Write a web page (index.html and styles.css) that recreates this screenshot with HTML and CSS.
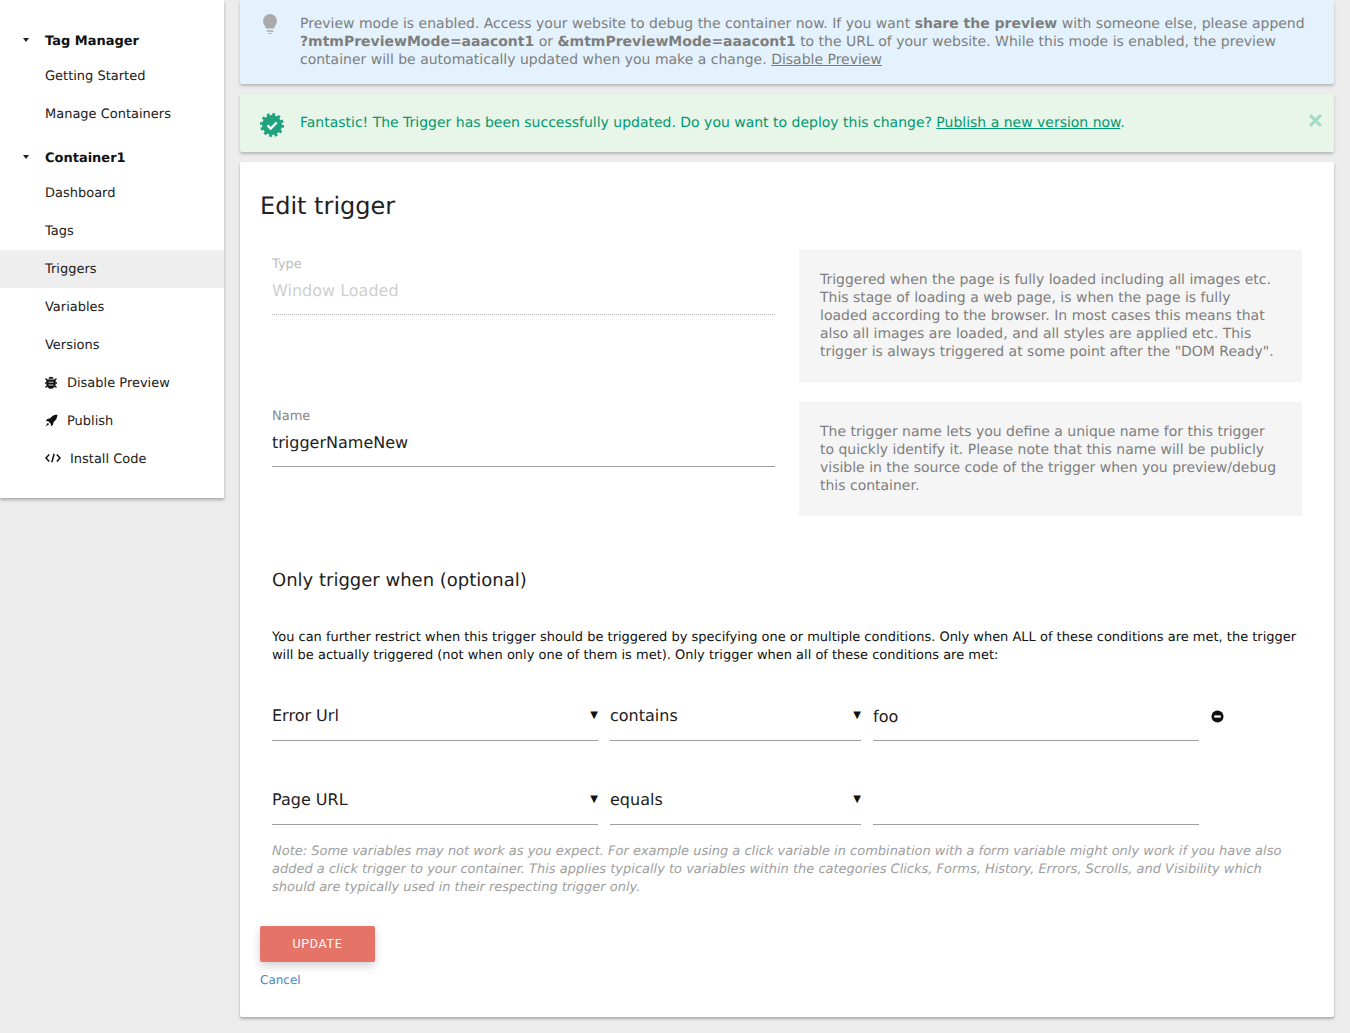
FILE: index.html
```html
<!DOCTYPE html>
<html lang="en">
<head>
<meta charset="utf-8">
<title>Edit trigger</title>
<link rel="stylesheet" href="styles.css">
</head>
<body>
<div class="layout">
  <nav class="sidebar">
    <div class="nav-head"><span class="caret"></span>Tag Manager</div>
    <a class="nav-item">Getting Started</a>
    <a class="nav-item">Manage Containers</a>
    <div class="nav-head second"><span class="caret"></span>Container1</div>
    <a class="nav-item">Dashboard</a>
    <a class="nav-item">Tags</a>
    <a class="nav-item active">Triggers</a>
    <a class="nav-item">Variables</a>
    <a class="nav-item">Versions</a>
    <a class="nav-item">
      <svg class="nav-icon bug" viewBox="0 0 12 13"><path d="M3.300 2.800a2.800 2.800 0 0 1 5.400 0z" fill="#111"/><path d="M1.800 3.400h8.400c.4.900.6 2 .6 3.300 0 3.600-1.900 6-4.800 6s-4.800-2.400-4.800-6c0-1.300.2-2.400.6-3.300z" fill="#111"/><path d="M.5 2.600l1.800 1.600M11.500 2.600L9.700 4.200M0 7h1.500M12 7h-1.500M.5 11.500l1.600-1.500M11.500 11.500L9.900 10" stroke="#111" stroke-width="1.300" fill="none"/><path d="M3.500 6.200h5M3.500 9h5" stroke="#fff" stroke-width=".8"/></svg>
      Disable Preview</a>
    <a class="nav-item">
      <svg class="nav-icon rocket" viewBox="0 0 14 14"><path d="M13.500.5c-3.500.2-6 1.500-8 4.200l-3 .6L.8 7.500l2.700.3 2.700 2.700.3 2.700 2.200-1.700.6-3c2.700-2 4-4.500 4.200-8.500z" fill="#111"/><path d="M3 9.500L.5 13.500l4-2.500z" fill="#111"/></svg>
      Publish</a>
    <a class="nav-item">
      <svg class="nav-icon code" viewBox="0 0 16 10"><path d="M4.200 1.500L1 5l3.200 3.500M11.800 1.500L15 5l-3.200 3.500M9.200.8L6.800 9.200" stroke="#111" stroke-width="1.500" fill="none"/></svg>
      Install Code</a>
  </nav>
  <main class="content">
    <section class="notice info">
      <svg class="notice-icon bulb" viewBox="0 0 16 22"><path d="M8 0a7.300 7.300 0 0 0-7.300 7.300c0 3.400 2.500 4.800 3 8h8.600c.5-3.200 3-4.600 3-8A7.300 7.300 0 0 0 8 0z" fill="#aaa"/><path d="M4.500 17h7v1.500h-7zM6 19.800h4l-1 1.200H7z" fill="#aaa"/></svg>
      <p class="notice-text">Preview mode is enabled. Access your website to debug the container now. If you want <b>share the preview</b> with someone else, please append <b>?mtmPreviewMode=aaacont1</b> or <b>&amp;mtmPreviewMode=aaacont1</b> to the URL of your website. While this mode is enabled, the preview container will be automatically updated when you make a change. <a class="underlined">Disable Preview</a></p>
    </section>
    <section class="notice success">
      <svg class="notice-icon badge" viewBox="0 0 24 24"><circle cx="12" cy="12" r="10" fill="#1fa27e"/><circle cx="12" cy="12" r="10.500" fill="none" stroke="#1fa27e" stroke-width="3" stroke-dasharray="2.749 2.749"/><path d="M7.500 12.300l3.200 3.200 6-6" stroke="#fff" stroke-width="2.400" fill="none"/></svg>
      <p class="notice-text">Fantastic! The Trigger has been successfully updated. Do you want to deploy this change? <a class="underlined">Publish a new version now</a>.</p>
      <svg class="close" viewBox="0 0 12 12"><path d="M1 1l10 10M11 1L1 11" stroke="#a3dcc6" stroke-width="2.800" fill="none"/></svg>
    </section>
    <section class="card">
      <h1 class="title">Edit trigger</h1>
      <div class="field-row first">
        <div class="field disabled">
          <label class="field-label">Type</label>
          <div class="field-value">Window Loaded</div>
        </div>
        <div class="help">Triggered when the page is fully loaded including all images etc. This stage of loading a web page, is when the page is fully loaded according to the browser. In most cases this means that also all images are loaded, and all styles are applied etc. This trigger is always triggered at some point after the "DOM Ready".</div>
      </div>
      <div class="field-row second">
        <div class="field">
          <label class="field-label">Name</label>
          <div class="field-value">triggerNameNew</div>
        </div>
        <div class="help">The trigger name lets you define a unique name for this trigger to quickly identify it. Please note that this name will be publicly visible in the source code of the trigger when you preview/debug this container.</div>
      </div>
      <h2 class="subtitle">Only trigger when (optional)</h2>
      <p class="desc">You can further restrict when this trigger should be triggered by specifying one or multiple conditions. Only when ALL of these conditions are met, the trigger will be actually triggered (not when only one of them is met). Only trigger when all of these conditions are met:</p>
      <div class="cond">
        <div class="select"><span>Error Url</span><i class="arrow">&#9660;</i></div>
        <div class="select"><span>contains</span><i class="arrow">&#9660;</i></div>
        <div class="select input">foo</div>
        <svg class="remove" viewBox="0 0 14 14"><circle cx="7" cy="7" r="6.500" fill="#111"/><rect x="3.500" y="5.800" width="7" height="2.400" fill="#fff"/></svg>
      </div>
      <div class="cond">
        <div class="select"><span>Page URL</span><i class="arrow">&#9660;</i></div>
        <div class="select"><span>equals</span><i class="arrow">&#9660;</i></div>
        <div class="select input"></div>
      </div>
      <p class="note">Note: Some variables may not work as you expect. For example using a click variable in combination with a form variable might only work if you have also added a click trigger to your container. This applies typically to variables within the categories Clicks, Forms, History, Errors, Scrolls, and Visibility which should are typically used in their respecting trigger only.</p>
      <button class="btn">UPDATE</button>
      <a class="cancel">Cancel</a>
    </section>
  </main>
</div>
</body>
</html>
```
FILE: styles.css
```css
* { box-sizing: border-box; }
html, body { margin: 0; padding: 0; }
body {
  background: #ececec;
  font-family: "DejaVu Sans", sans-serif;
  color: #212121;
  height: 1033px;
  overflow: hidden;
  text-rendering: geometricPrecision;
}
.layout { display: flex; align-items: flex-start; gap: 16px; }

.sidebar {
  width: 224px;
  height: 498px;
  flex: none;
  background: #fff;
  padding-top: 25px;
  box-shadow: 0 2px 3px rgba(0,0,0,.28);
  font-size: 12.993px;
}
.nav-head {
  height: 32px;
  display: flex;
  align-items: center;
  padding-left: 45px;
  font-weight: 700;
  color: #111;
  position: relative;
}
.nav-head.second { margin-top: 9px; }
.caret {
  position: absolute;
  left: 23px;
  top: 13px;
  border-left: 3px solid transparent;
  border-right: 3px solid transparent;
  border-top: 4px solid #222;
}
.nav-item {
  display: flex;
  align-items: center;
  height: 38px;
  padding-left: 45px;
  color: #212121;
}
.nav-item.active { background: #eee; }
.nav-icon { flex: none; }
.nav-icon.bug { width: 12px; height: 13px; margin-right: 10px; margin-top: -1px; }
.nav-icon.rocket { width: 13px; height: 13px; margin-right: 9px; margin-top: -2px; }
.nav-icon.code { width: 16px; height: 10px; margin-right: 9px; margin-top: -3px; }

.content { width: 1094px; flex: none; display: flex; flex-direction: column; gap: 10px; }
.notice {
  display: flex;
  position: relative;
  border-radius: 2px;
  box-shadow: 0 2px 3px rgba(0,0,0,.22);
  font-size: 13.99px;
  line-height: 18px;
  padding-left: 60px;
}
.notice-text { margin: 0; }
.notice.info { height: 84px; background: #e3f2fd; color: #7e7e7e; padding-top: 15px; padding-right: 28px; }
.notice.info b { font-weight: 700; }
.notice.success { height: 58px; background: #e8f5e9; color: #00996f; align-items: center; }
.underlined { text-decoration: underline; }
.notice-icon { position: absolute; }
.bulb { left: 22px; top: 14px; width: 16px; height: 21px; }
.badge { left: 20px; top: 19px; width: 24px; height: 24px; }
.close {
  position: absolute;
  right: 12px;
  top: 20px;
  width: 13px;
  height: 13px;
}

.card {
  height: 855px;
  background: #fff;
  border-radius: 2px;
  box-shadow: 0 2px 3px rgba(0,0,0,.28);
  padding: 27px 20px 0;
}
.title { margin: 0; font-size: 24px; line-height: 34px; font-weight: 400; color: #212121; }
.field-row {
  display: grid;
  grid-template-columns: 503px 503px;
  gap: 24px;
  padding-left: 12px;
  align-items: start;
}
.field-row.first { margin-top: 27px; }
.field-row.second { margin-top: 20px; }
.field-label { display: block; padding-top: 8px; font-size: 12.993px; line-height: 14px; color: #888; }
.field-value {
  height: 43px;
  padding-top: 9px;
  font-size: 16px;
  line-height: 20px;
  color: #212121;
  border-bottom: 1px solid #9e9e9e;
}
.disabled .field-label { color: #bdbdbd; }
.disabled .field-value { color: #cfcfcf; border-bottom: 1px dotted #b5b5b5; }
.help {
  background: #f5f5f5;
  color: #7e7e7e;
  font-size: 13.99px;
  line-height: 18px;
  padding: 21px 21px 21px;
}
.subtitle { margin: 53px 0 0 12px; font-size: 18px; line-height: 24px; font-weight: 400; color: #212121; }
.desc { margin: 36px 0 0 12px; font-size: 12.993px; line-height: 18px; color: #111; }
.cond {
  display: grid;
  grid-template-columns: 326px 251px 326px 40px;
  gap: 12px;
  margin-left: 12px;
  align-items: center;
}
.desc + .cond { margin-top: 16px; }
.cond + .cond { margin-top: 24px; }
.select {
  height: 60px;
  display: flex;
  justify-content: space-between;
  align-items: center;
  padding-top: 9px;
  font-size: 16px;
  color: #212121;
  border-bottom: 1px solid #9e9e9e;
}
.select.input { padding-top: 11px; }
.arrow { font-style: normal; font-size: 10px; line-height: 12px; color: #111; margin-top: 1px; }
.remove { width: 13px; height: 13px; margin-top: 11px; }
.note { margin: 18px 12px 0 12px; font-size: 12.993px; line-height: 18px; font-style: italic; color: #9e9e9e; }
.btn {
  display: block;
  margin-top: 29px;
  width: 115px;
  height: 36px;
  padding: 0 0 2px;
  background: #e57368;
  color: #fff;
  border: 0;
  border-radius: 2px;
  font-family: Roboto, sans-serif;
  font-size: 12.5px;
  letter-spacing: .65px;
  box-shadow: 0 4px 10px rgba(0,0,0,.18);
}
.cancel { display: block; margin-top: 10px; font-size: 12px; line-height: 16px; color: #4a86c0; }
```
